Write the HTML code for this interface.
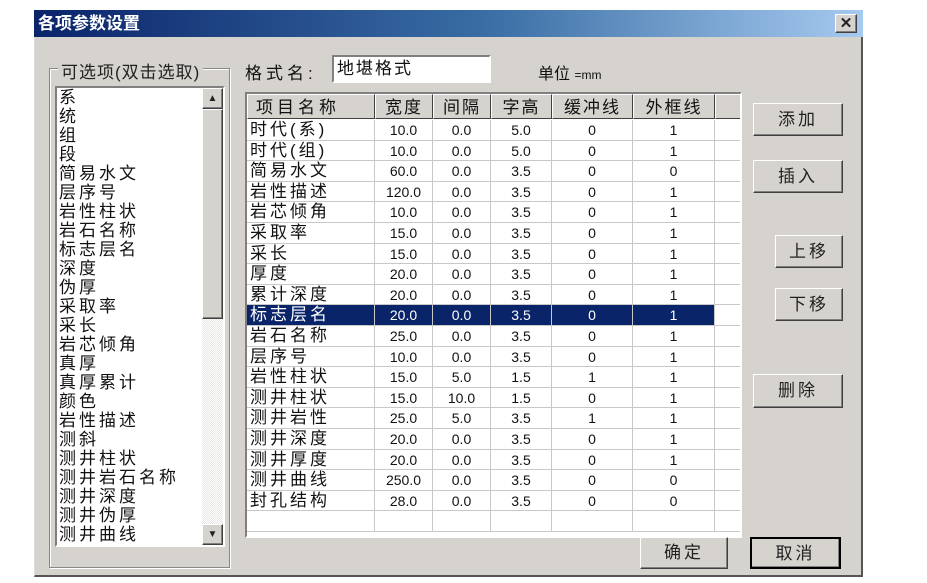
<!DOCTYPE html>
<html><head><meta charset="utf-8"><style>
*{margin:0;padding:0;box-sizing:border-box}
body{width:927px;height:583px;background:#fff;position:relative;overflow:hidden;font-family:"Liberation Sans","Noto Sans CJK SC","WenQuanYi Zen Hei",sans-serif;color:#111}
.a{position:absolute}
.win{left:34px;top:10px;width:829px;height:567px;background:#d6d3ce;border-right:2px solid #555;border-bottom:2px solid #555;border-top:1px solid #aaa;border-left:1px solid #ddd}
.title{left:34px;top:10px;width:829px;height:27px;background:linear-gradient(90deg,#0a246a,#3a6ea5 55%,#a6caf0);color:#fff;font-weight:bold;font-size:17px;line-height:27px;padding-left:4px}
.btn{background:#d6d3ce;border:1px solid;border-color:#fff #404040 #404040 #fff;box-shadow:inset -1px -1px 0 #808080;text-align:center;font-size:17px;color:#222;letter-spacing:3px}
.sunk{border:2px solid;border-color:#808080 #fff #fff #808080}
.cell{position:absolute;height:20.6px;line-height:20.6px;font-size:14px;text-align:center;border-right:1px solid #c8c8c8;border-bottom:1px solid #c8c8c8}
.hd{position:absolute;top:0;height:25px;line-height:25px;font-size:17px;text-align:center;background:#d6d3ce;border:1px solid;border-color:#fff #404040 #404040 #fff;letter-spacing:2px}
.li{font-size:17px;line-height:19px;height:19px;letter-spacing:3px}
</style></head><body>
<div class="a win"></div>
<div class="a title">各项参数设置</div>
<div class="a btn" style="left:835px;top:14px;width:22px;height:19px;font-size:15px;line-height:17px;font-weight:bold;letter-spacing:0">✕</div>

<div class="a" style="left:49px;top:68px;width:181px;height:500px;border:1px solid #888;box-shadow:1px 1px 0 #fff,inset 1px 1px 0 #fff"></div>
<div class="a" style="left:58px;top:58px;background:#d6d3ce;font-size:17px;padding:0 3px;color:#222;letter-spacing:1px">可选项(双击选取)</div>
<div class="a sunk" style="left:55px;top:86px;width:170px;height:461px;background:#fff"></div>
<div class="a" style="left:202px;top:88px;width:21px;height:457px;background:repeating-conic-gradient(#e8e6e2 0 25%,#fff 0 50%) 0 0/2px 2px"></div>
<div class="a btn" style="left:202px;top:88px;width:21px;height:21px;font-size:10px;line-height:19px;letter-spacing:0">▲</div>
<div class="a btn" style="left:202px;top:109px;width:21px;height:210px"></div>
<div class="a btn" style="left:202px;top:524px;width:21px;height:21px;font-size:10px;line-height:19px;letter-spacing:0">▼</div>
<div class="a" style="left:59px;top:88px">
<div class="li">系</div><div class="li">统</div><div class="li">组</div><div class="li">段</div><div class="li">简易水文</div><div class="li">层序号</div><div class="li">岩性柱状</div><div class="li">岩石名称</div><div class="li">标志层名</div><div class="li">深度</div><div class="li">伪厚</div><div class="li">采取率</div><div class="li">采长</div><div class="li">岩芯倾角</div><div class="li">真厚</div><div class="li">真厚累计</div><div class="li">颜色</div><div class="li">岩性描述</div><div class="li">测斜</div><div class="li">测井柱状</div><div class="li">测井岩石名称</div><div class="li">测井深度</div><div class="li">测井伪厚</div><div class="li">测井曲线</div>
</div>

<div class="a" style="left:245px;top:59px;font-size:17px;letter-spacing:4px">格式名:</div>
<div class="a sunk" style="left:332px;top:55px;width:159px;height:28px;background:#fff;font-size:17px;line-height:24px;padding-left:3px;letter-spacing:2px">地堪格式</div>
<div class="a" style="left:538px;top:60px;font-size:16px">单位 <span style="font-size:12px">=mm</span></div>

<div class="a sunk" style="left:245px;top:92px;width:497px;height:446px;background:#fff;overflow:hidden">
<div class="hd" style="left:0;width:128px;text-align:left;padding-left:8px;letter-spacing:4px">项目名称</div>
<div class="hd" style="left:128px;width:58px">宽度</div>
<div class="hd" style="left:186px;width:58px">间隔</div>
<div class="hd" style="left:244px;width:61px">字高</div>
<div class="hd" style="left:305px;width:81px">缓冲线</div>
<div class="hd" style="left:386px;width:82px">外框线</div>
<div class="hd" style="left:468px;width:30px"></div>
<div id="rows"></div>
</div>

<div class="a btn" style="left:753px;top:103px;width:90px;height:33px;line-height:31px">添加</div>
<div class="a btn" style="left:753px;top:160px;width:90px;height:33px;line-height:31px">插入</div>
<div class="a btn" style="left:775px;top:235px;width:68px;height:33px;line-height:31px">上移</div>
<div class="a btn" style="left:775px;top:288px;width:68px;height:33px;line-height:31px">下移</div>
<div class="a btn" style="left:753px;top:374px;width:90px;height:34px;line-height:32px">删除</div>
<div class="a btn" style="left:640px;top:537px;width:88px;height:32px;line-height:30px">确定</div>
<div class="a btn" style="left:750px;top:537px;width:91px;height:32px;line-height:30px;border:2px solid #000">取消</div>

<script>
var d=[["时代(系)","10.0","0.0","5.0","0","1"],["时代(组)","10.0","0.0","5.0","0","1"],["简易水文","60.0","0.0","3.5","0","0"],["岩性描述","120.0","0.0","3.5","0","1"],["岩芯倾角","10.0","0.0","3.5","0","1"],["采取率","15.0","0.0","3.5","0","1"],["采长","15.0","0.0","3.5","0","1"],["厚度","20.0","0.0","3.5","0","1"],["累计深度","20.0","0.0","3.5","0","1"],["标志层名","20.0","0.0","3.5","0","1"],["岩石名称","25.0","0.0","3.5","0","1"],["层序号","10.0","0.0","3.5","0","1"],["岩性柱状","15.0","5.0","1.5","1","1"],["测井柱状","15.0","10.0","1.5","0","1"],["测井岩性","25.0","5.0","3.5","1","1"],["测井深度","20.0","0.0","3.5","0","1"],["测井厚度","20.0","0.0","3.5","0","1"],["测井曲线","250.0","0.0","3.5","0","0"],["封孔结构","28.0","0.0","3.5","0","0"],["","","","","",""]];
var L=[0,128,186,244,305,386,468],W=[128,58,58,61,81,82,30],h="";
d.forEach(function(r,i){var t=26+i*20.6,s=i==9;
for(var j=0;j<7;j++){var st="left:"+L[j]+"px;top:"+t+"px;width:"+W[j]+"px;";
if(s&&j<6)st+="background:#0a246a;color:#fff;";
if(j==0)st+="text-align:left;padding-left:3px;font-size:17px;letter-spacing:3px;";
h+='<div class="cell" style="'+st+'">'+(j<6?r[j]:"")+'</div>';}});
document.getElementById("rows").innerHTML=h;
</script>
</body></html>
